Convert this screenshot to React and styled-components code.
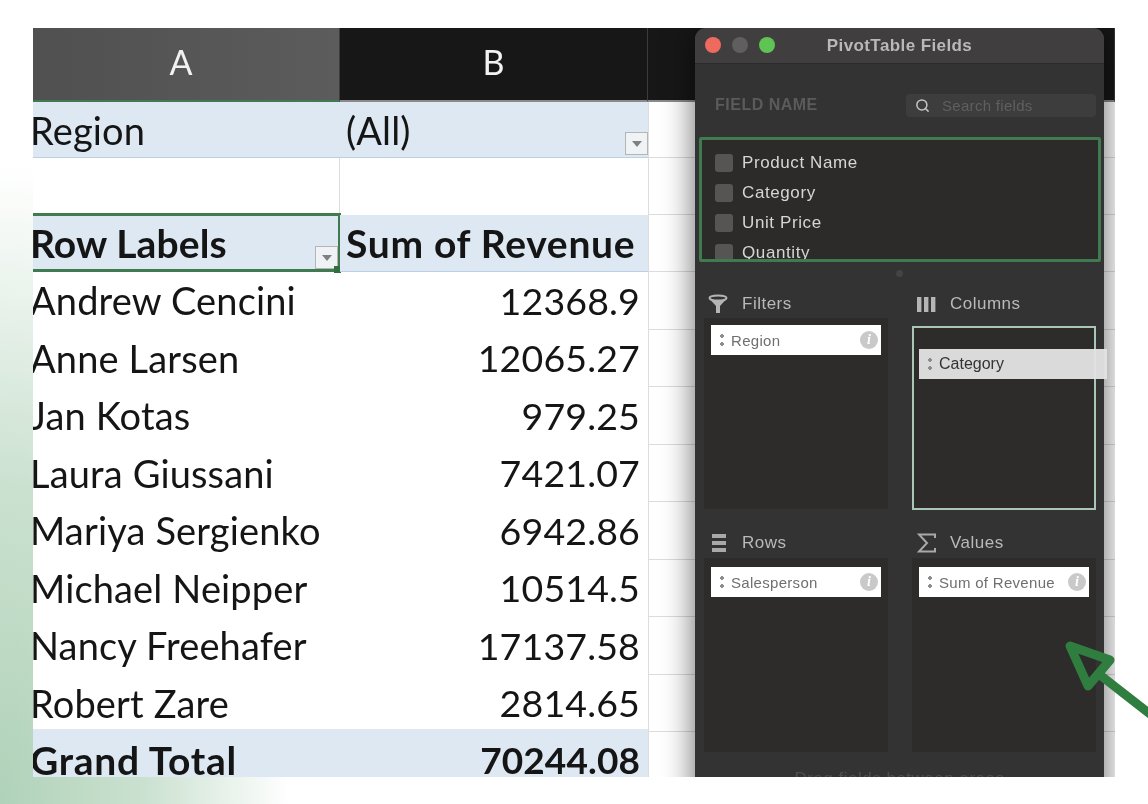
import React from 'react';
import styled, { createGlobalStyle } from 'styled-components';
import { Search } from 'lucide-react';

const GlobalStyle = createGlobalStyle`
  html, body { margin: 0; padding: 0; background: #fff; }
  * { box-sizing: border-box; }
`;

const Page = styled.div`
  position: relative;
  width: 1148px;
  height: 804px;
  overflow: hidden;
  padding: 28px 33px 27px 33px;
  background: radial-gradient(ellipse 290px 640px at 0 100%, #b0d2b9 0%, #cbe1d0 50%, #fff 100%);
`;

const Sheet = styled.div`
  position: relative;
  width: 1082px;
  height: 749px;
  overflow: hidden;
  background: #fff;
  filter: blur(0.7px);
`;

const HeaderRow = styled.div`
  display: grid;
  grid-template-columns: 307px 308px 1fr;
  height: 74px;
`;

const ColHead = styled.div`
  display: flex;
  align-items: center;
  justify-content: center;
  padding: 0 ${p => (p.$active ? 10 : 0)}px 6px 0;
  font: 400 34px Lato, sans-serif;
  color: #f2f2f2;
  background: ${p => (p.$active ? 'linear-gradient(90deg, #505050, #5c5c5c)' : '#171717')};
  border-bottom: 2px solid ${p => (p.$active ? '#3f7a50' : '#8a8a8a')};
  border-right: 1px solid #3c3c3c;
`;

const Row = styled.div`
  display: grid;
  grid-template-columns: 307px 308px 1fr;
  height: ${p => p.$h || 57.5}px;
  margin-top: ${p => p.$pull || 0}px;
`;

const Cell = styled.div`
  position: relative;
  display: flex;
  align-items: center;
  justify-content: ${p => (p.$right ? 'flex-end' : 'flex-start')};
  padding: ${p => (p.$right ? '0 8px 0 0' : p.$b ? '0 0 0 6px' : '0')};
  overflow: ${p => (p.$open ? 'visible' : 'hidden')};
  white-space: nowrap;
  font-family: Lato, sans-serif;
  font-weight: ${p => (p.$bold ? 700 : 400)};
  font-size: ${p => (p.$right ? (p.$bold ? 37 : 37.5) : p.$bold ? 39 : 38)}px;
  letter-spacing: ${p => (p.$wide ? 0.7 : p.$bold ? 0.1 : 0.15)}px;
  color: #151515;
  background: ${p => (p.$fill ? '#dde8f3' : 'transparent')};
  border-bottom: 1px solid ${p => (p.$fill ? '#b9d0e8' : 'transparent')};
  border-right: ${p => (p.$line ? '1px solid #dcdcdc' : 'none')};
`;

const Name = styled.span`
  margin-left: -3px;
`;

const GridCell = styled.div`
  border-bottom: 1px solid #dcdcdc;
  border-left: 1px solid #dcdcdc;
`;

const Selection = styled.div`
  position: absolute;
  left: -2px;
  top: -2px;
  right: -1px;
  bottom: -1px;
  border: 3px solid #3f7a50;
  border-left: none;
  pointer-events: none;
  &::after {
    content: '';
    position: absolute;
    right: -3px;
    bottom: -4px;
    width: 7px;
    height: 7px;
    background: #2e7040;
  }
`;

const DropButton = styled.div`
  position: absolute;
  right: ${p => p.$right}px;
  bottom: 2px;
  width: 23px;
  height: 23px;
  display: flex;
  align-items: center;
  justify-content: center;
  background: #f0f3f6;
  border: 1px solid #b5b5b5;
  &::after {
    content: '';
    border-left: 5px solid transparent;
    border-right: 5px solid transparent;
    border-top: 6px solid #808080;
  }
`;

const Panel = styled.div`
  position: absolute;
  left: 662px;
  top: 0;
  width: 409px;
  height: 790px;
  background: #333333;
  border-radius: 11px 11px 0 0;
  box-shadow: 0 0 32px rgba(0, 0, 0, 0.6);
  font-family: 'Liberation Sans', sans-serif;
`;

const TitleBar = styled.div`
  position: relative;
  display: flex;
  align-items: center;
  justify-content: center;
  height: 36px;
  background: #403e3e;
  border-radius: 11px 11px 0 0;
  border-bottom: 1px solid #2b2b2b;
  font-size: 17px;
  font-weight: 700;
  letter-spacing: 0.4px;
  color: #b9b9b9;
`;

const Lights = styled.div`
  position: absolute;
  left: 10px;
  top: 9px;
  display: flex;
  gap: 11px;
`;

const Light = styled.span`
  width: 16px;
  height: 16px;
  border-radius: 50%;
  background: ${p => p.$c};
`;

const SearchRow = styled.div`
  display: flex;
  align-items: center;
  justify-content: space-between;
  height: 30px;
  margin-top: 26px;
  padding: 0 8px 0 20px;
`;

const FieldName = styled.div`
  font-size: 16px;
  font-weight: 700;
  color: #5b5b5b;
  letter-spacing: 0.5px;
`;

const SearchBox = styled.div`
  display: flex;
  align-items: center;
  gap: 12px;
  width: 190px;
  height: 23px;
  padding-left: 9px;
  border-radius: 4px;
  background: #3d3d3d;
  font-size: 15px;
  letter-spacing: 0.3px;
  color: #5f5f5f;
  svg { color: #c4c4c4; }
`;

const FieldList = styled.div`
  height: 125px;
  margin: 17px 3px 0 4px;
  padding: 8px 0 0 13px;
  border: 3px solid #3f7a50;
  border-radius: 2px;
  background: #2d2b2a;
  overflow: hidden;
`;

const FieldRow = styled.div`
  display: flex;
  align-items: center;
  gap: 9px;
  height: 30px;
  font-size: 17px;
  letter-spacing: 0.6px;
  color: #d6d6d6;
`;

const Check = styled.span`
  width: 18px;
  height: 18px;
  border-radius: 3px;
  background: #565554;
`;

const Splitter = styled.div`
  width: 7px;
  height: 7px;
  margin: 8px auto 0;
  border-radius: 50%;
  background: #444;
`;

const Areas = styled.div`
  display: grid;
  grid-template-columns: 184px 184px;
  column-gap: 24px;
  padding-left: 9px;
  margin-top: 8px;
`;

const Area = styled.div`
  display: flex;
  flex-direction: column;
`;

const AreaHead = styled.div`
  display: flex;
  align-items: center;
  gap: ${p => p.$gap || 14}px;
  height: ${p => p.$h}px;
  padding: ${p => p.$top}px 0 0 ${p => p.$indent || 4}px;
  font-size: 17px;
  letter-spacing: 0.5px;
  color: #b9b9b9;
`;

const Pane = styled.div`
  position: relative;
  height: ${p => p.$h}px;
  margin-top: ${p => p.$offset || 0}px;
  padding: ${p => (p.$tight ? 7 : 9)}px 7px;
  background: #2d2c2b;
  outline: ${p => (p.$focus ? '2px solid #a9c7b4' : 'none')};
  outline-offset: -2px;
`;

const Chip = styled.div`
  display: flex;
  align-items: center;
  gap: 7px;
  height: 30px;
  padding: 0 3px 0 9px;
  background: #fff;
  font-size: 15px;
  letter-spacing: 0.3px;
  color: #6f6f6f;
`;

const Grip = styled.span`
  width: 4px;
  height: 12px;
  flex: none;
  background: radial-gradient(circle at 2px 2px, #8d8d8d 1.6px, transparent 2px) 0 0 / 4px 8px;
`;

const ChipLabel = styled.span`
  flex: 1;
  white-space: nowrap;
`;

const Info = styled.span`
  display: flex;
  align-items: center;
  justify-content: center;
  flex: none;
  width: 18px;
  height: 18px;
  border-radius: 50%;
  background: #c9c9c9;
  color: #fff;
  font: italic 700 14px 'Liberation Serif', serif;
`;

const DragChip = styled.div`
  position: absolute;
  left: 7px;
  top: 23px;
  display: flex;
  align-items: center;
  gap: 7px;
  width: 188px;
  height: 30px;
  padding-left: 9px;
  background: rgba(226, 226, 226, 0.96);
  font-size: 16px;
  color: #333;
`;

const Hint = styled.div`
  margin-top: 17px;
  text-align: center;
  font-size: 17px;
  letter-spacing: 0.5px;
  color: #4e4e4e;
`;

const Arrow = styled.svg`
  position: absolute;
  left: 1060px;
  top: 636px;
`;

const Funnel = () => (
  <svg width="20" height="20" viewBox="0 0 20 20" fill="none">
    <ellipse cx="10" cy="4" rx="8.5" ry="2.6" stroke="#b5b5b5" strokeWidth="2" />
    <path d="M2.5 6 8 12v7h4v-7l5.5-6" fill="#b5b5b5" />
  </svg>
);

const ColumnsIcon = () => (
  <svg width="19" height="15" viewBox="0 0 19 15" fill="#b5b5b5">
    <rect x="0" y="0" width="4.4" height="15" />
    <rect x="7" y="0" width="4.4" height="15" />
    <rect x="14" y="0" width="4.4" height="15" />
  </svg>
);

const RowsIcon = () => (
  <svg width="14" height="18" viewBox="0 0 14 18" fill="#a9a9a9">
    <rect width="14" height="4" />
    <rect y="7" width="14" height="4" />
    <rect y="14" width="14" height="4" />
  </svg>
);

const SigmaIcon = () => (
  <svg width="19" height="20" viewBox="0 0 19 20" fill="none" stroke="#a9a9a9" strokeWidth="2">
    <path d="M18 5V1.5H2L10 10l-8 8.5h16V15" />
  </svg>
);

const people = [
  ['Andrew Cencini', '12368.9'],
  ['Anne Larsen', '12065.27'],
  ['Jan Kotas', '979.25'],
  ['Laura Giussani', '7421.07'],
  ['Mariya Sergienko', '6942.86'],
  ['Michael Neipper', '10514.5'],
  ['Nancy Freehafer', '17137.58'],
  ['Robert Zare', '2814.65'],
];

const fields = ['Product Name', 'Category', 'Unit Price', 'Quantity'];

const FieldChip = ({ label }) => (
  <Chip>
    <Grip />
    <ChipLabel>{label}</ChipLabel>
    <Info>i</Info>
  </Chip>
);

export default function App() {
  return (
    <Page>
      <GlobalStyle />
      <Sheet>
        <HeaderRow>
          <ColHead $active>A</ColHead>
          <ColHead>B</ColHead>
          <ColHead />
        </HeaderRow>
        <Row $h={56}>
          <Cell $fill><Name>Region</Name></Cell>
          <Cell $fill $b>
            (All)
            <DropButton $right={0} />
          </Cell>
          <GridCell />
        </Row>
        <Row $h={57}>
          <Cell $line />
          <Cell />
          <GridCell />
        </Row>
        <Row $h={57}>
          <Cell $fill $bold $open>
            <Name>Row Labels</Name>
            <DropButton $right={2} />
            <Selection />
          </Cell>
          <Cell $fill $bold $b $wide>Sum of Revenue</Cell>
          <GridCell />
        </Row>
        {people.map(([name, total]) => (
          <Row key={name}>
            <Cell><Name>{name}</Name></Cell>
            <Cell $right>{total}</Cell>
            <GridCell />
          </Row>
        ))}
        <Row $h={62} $pull={-3}>
          <Cell $fill $bold $wide><Name>Grand Total</Name></Cell>
          <Cell $fill $bold $right>70244.08</Cell>
          <GridCell />
        </Row>

        <Panel>
          <TitleBar>
            <Lights>
              <Light $c="#ee6a5f" />
              <Light $c="#5f5f5f" />
              <Light $c="#5fc454" />
            </Lights>
            PivotTable Fields
          </TitleBar>
          <SearchRow>
            <FieldName>FIELD NAME</FieldName>
            <SearchBox>
              <Search size={15} strokeWidth={2.4} />
              Search fields
            </SearchBox>
          </SearchRow>
          <FieldList>
            {fields.map(f => (
              <FieldRow key={f}>
                <Check />
                {f}
              </FieldRow>
            ))}
          </FieldList>
          <Splitter />
          <Areas>
            <Area>
              <AreaHead $h={33} $top={5} $indent={4}>
                <Funnel />
                Filters
              </AreaHead>
              <Pane $h={191} $tight><FieldChip label="Region" /></Pane>
            </Area>
            <Area>
              <AreaHead $h={33} $top={5} $indent={5}>
                <ColumnsIcon />
                Columns
              </AreaHead>
              <Pane $h={184} $offset={8} $focus>
                <DragChip>
                  <Grip />
                  Category
                </DragChip>
              </Pane>
            </Area>
            <Area>
              <AreaHead $h={48} $top={18} $indent={8} $gap={16}>
                <RowsIcon />
                Rows
              </AreaHead>
              <Pane $h={194}><FieldChip label="Salesperson" /></Pane>
            </Area>
            <Area>
              <AreaHead $h={48} $top={18} $indent={5} $gap={14}>
                <SigmaIcon />
                Values
              </AreaHead>
              <Pane $h={194}><FieldChip label="Sum of Revenue" /></Pane>
            </Area>
          </Areas>
          <Hint>Drag fields between areas</Hint>
        </Panel>
      </Sheet>
      <Arrow width="88" height="90" viewBox="0 0 88 90" fill="none">
        <path d="M10 10 50 24 28 50Z" stroke="#2f7d3f" strokeWidth="9" strokeLinejoin="round" />
        <path d="M40 39 90 78" stroke="#2f7d3f" strokeWidth="9" strokeLinecap="round" />
      </Arrow>
    </Page>
  );
}
